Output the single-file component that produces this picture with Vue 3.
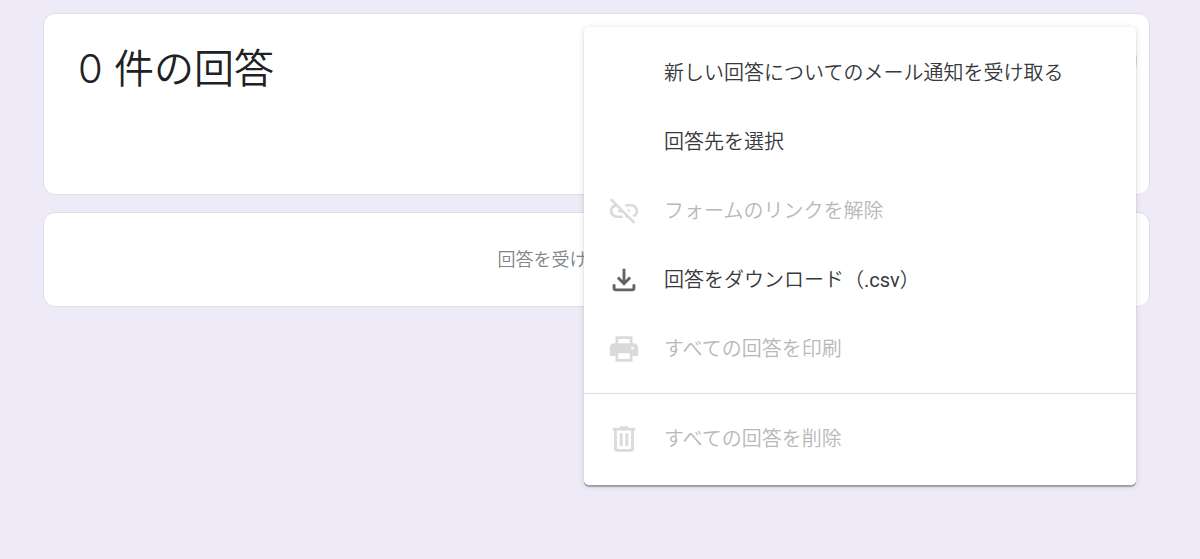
<script setup>
const items = [
  { label: '新しい回答についてのメール通知を受け取る' },
  { label: '回答先を選択' },
  {
    label: 'フォームのリンクを解除',
    disabled: true,
    icon: 'M17 7h-4v1.9h4c1.71 0 3.1 1.39 3.1 3.1 0 1.43-.98 2.63-2.31 2.98l1.46 1.46C20.88 15.61 22 13.95 22 12c0-2.76-2.24-5-5-5zm-1 4h-2.19l2 2H16v-2zM2 4.27l3.11 3.11C3.29 8.12 2 9.91 2 12c0 2.76 2.24 5 5 5h4v-1.9H7c-1.71 0-3.1-1.39-3.1-3.1 0-1.59 1.21-2.9 2.76-3.07L8.73 11H8v2h2.73L13 15.27V17h1.73l4.01 4L20 19.74 3.27 3 2 4.27z',
  },
  {
    label: '回答をダウンロード（',
    extension: '.csv',
    tail: '）',
    icon: 'M12 16l-5-5 1.400-1.450 2.600 2.600V4h2v8.150l2.600-2.600L17 11l-5 5zM6 20c-1.100 0-2-.900-2-2v-3h2v3h12v-3h2v3c0 1.100-.900 2-2 2H6z',
  },
  {
    label: 'すべての回答を印刷',
    disabled: true,
    icon: 'M19 8h-1V3H6v5H5c-1.660 0-3 1.340-3 3v6h4v4h12v-4h4v-6c0-1.660-1.340-3-3-3zM8 5h8v3H8V5zm8 14H8v-4h8v4zm2-6.500c-.550 0-1-.450-1-1s.450-1 1-1 1 .450 1 1-.450 1-1 1z',
  },
  {
    label: 'すべての回答を削除',
    disabled: true,
    divided: true,
    icon: 'M15 4V3H9v1H4v2h1v13c0 1.100.900 2 2 2h10c1.100 0 2-.900 2-2V6h1V4h-5zm2 15H7V6h10v13zM9 8h2v9H9zm4 0h2v9h-2z',
  },
]
</script>

<template>
  <main class="page">
    <section class="card summary">
      <h1>0 件の回答</h1>
      <div class="anchor">
        <button class="more" type="button" aria-label="その他" aria-haspopup="menu"></button>
        <div class="menu" role="menu">
          <template v-for="item in items" :key="item.label">
            <hr v-if="item.divided" />
            <button type="button" role="menuitem" class="item" :disabled="item.disabled">
              <span class="icon">
                <svg v-if="item.icon" viewBox="0 0 24 24" aria-hidden="true">
                  <path :d="item.icon" />
                </svg>
              </span>
              <span>{{ item.label }}<span v-if="item.extension" class="extension">{{ item.extension }}</span>{{ item.tail }}</span>
            </button>
          </template>
        </div>
      </div>
    </section>
    <section class="card status">回答を受け付けています</section>
  </main>
</template>

<style>
body {
  margin: 0;
  background: #eeeaf8;
}
</style>

<style scoped>
.page {
  box-sizing: border-box;
  min-height: 100vh;
  display: flex;
  flex-direction: column;
  gap: 17px;
  padding: 13px 50px 13px 43px;
  font-family: Roboto, "Noto Sans CJK JP", sans-serif;
}
.card {
  box-sizing: border-box;
  background: #fff;
  border: 1px solid #dfdde6;
  border-radius: 12px;
}
.summary {
  display: flex;
  justify-content: space-between;
  align-items: flex-start;
  min-height: 182px;
  padding: 19px 12px 19px 34px;
}
h1 {
  margin: 0;
  font-family: Inter, "Noto Sans CJK JP", sans-serif;
  font-size: 40px;
  line-height: 72px;
  font-weight: 350;
  color: #202124;
}
.anchor {
  position: relative;
}
.more {
  display: block;
  width: 56px;
  height: 56px;
  padding: 0;
  border: 0;
  border-radius: 50%;
  background: #d5d5d8;
}
.menu {
  position: absolute;
  top: -6px;
  right: 1px;
  z-index: 1;
  box-sizing: border-box;
  width: 552px;
  padding: 11px 0 12px;
  background: #fff;
  border-radius: 5px;
  box-shadow: 0 2px 1px rgba(60, 58, 70, 0.38), 0 1px 6px rgba(60, 58, 70, 0.16);
}
.item {
  display: flex;
  align-items: center;
  gap: 23px;
  width: 100%;
  height: 69px;
  padding: 0 23px;
  border: 0;
  background: none;
  font-family: inherit;
  font-size: 20px;
  font-weight: 350;
  line-height: 30px;
  text-align: left;
  white-space: nowrap;
  color: #38393c;
}
.item:disabled {
  color: #b8b8ba;
}
.extension {
  font-weight: 400;
}
.icon {
  flex: none;
  width: 34px;
  height: 34px;
}
.icon svg {
  display: block;
  fill: #5f6368;
}
.item:disabled .icon svg {
  fill: #d8dadc;
}
hr {
  margin: 10px 0;
  border: 0;
  border-top: 1px solid #dcdcde;
}
.status {
  padding: 33px 24px;
  font-size: 18px;
  line-height: 27px;
  font-weight: 350;
  text-align: center;
  color: #80858a;
}
</style>
